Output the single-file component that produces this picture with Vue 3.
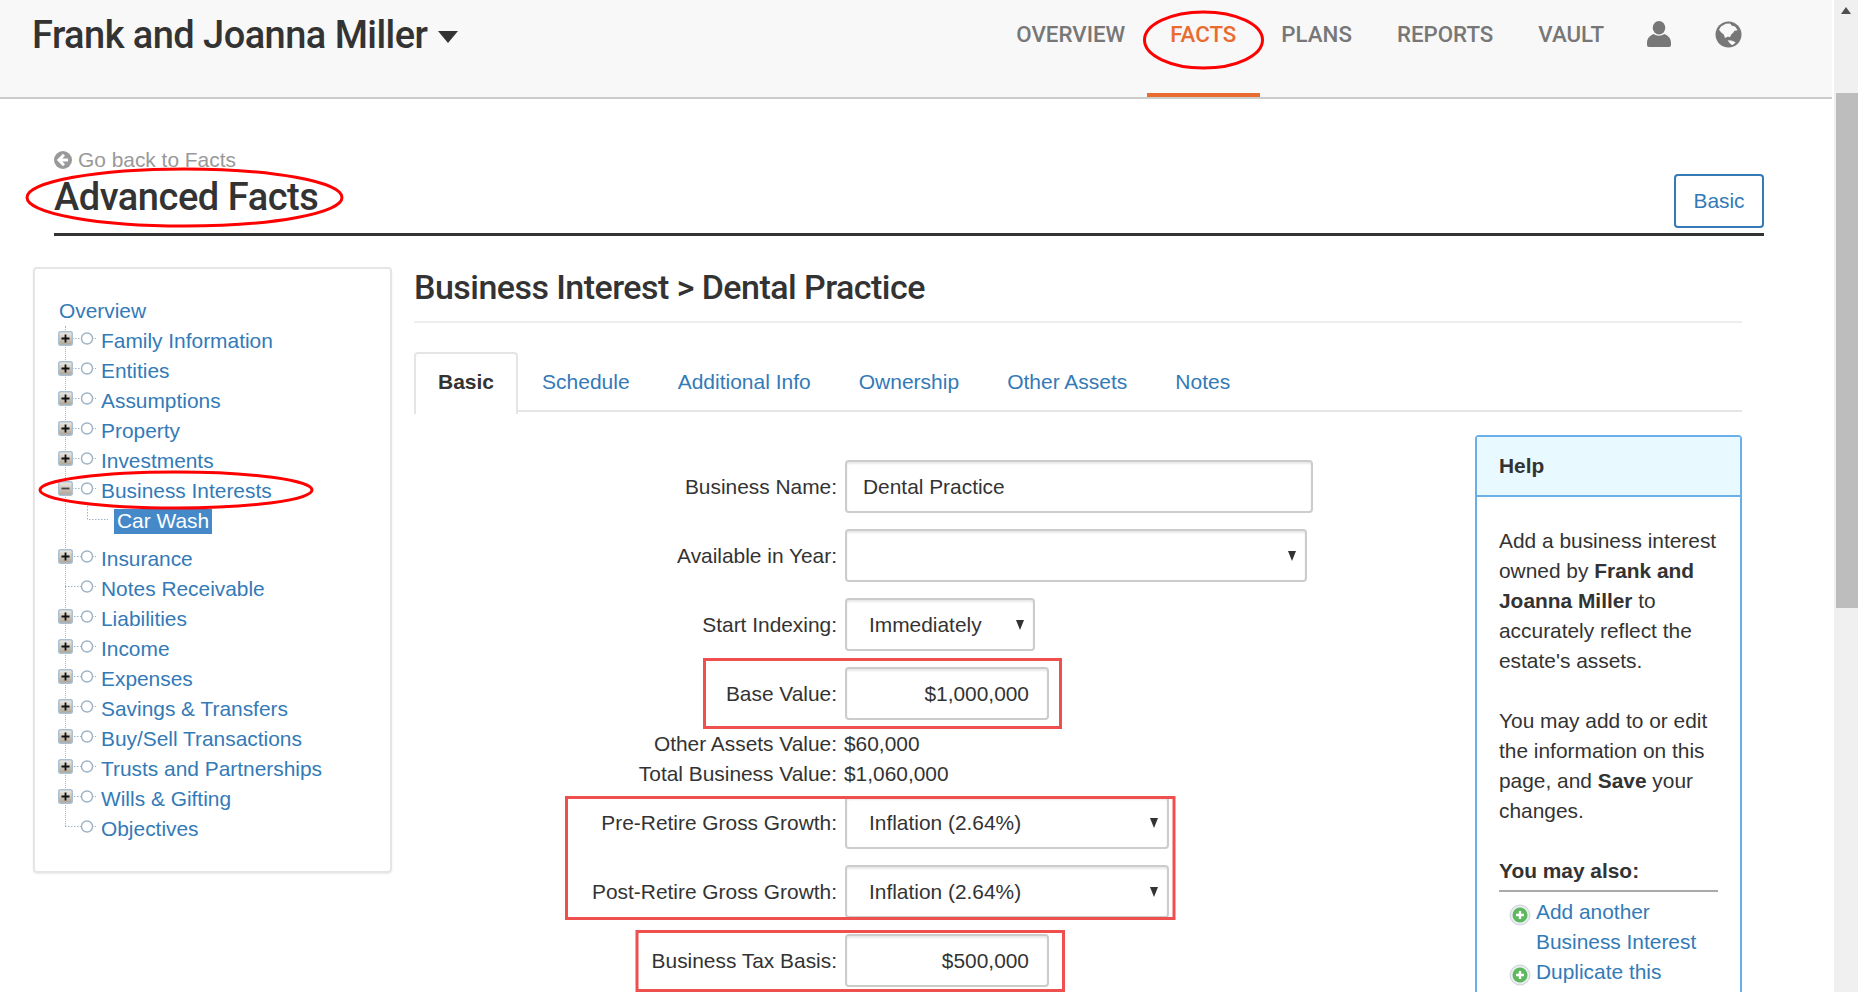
<script setup>
const navItems = [
  { label: 'OVERVIEW' },
  { label: 'FACTS', active: true },
  { label: 'PLANS' },
  { label: 'REPORTS' },
  { label: 'VAULT' }
]
const treeTop = [
  { label: 'Family Information', kind: 'plus' },
  { label: 'Entities', kind: 'plus' },
  { label: 'Assumptions', kind: 'plus' },
  { label: 'Property', kind: 'plus' },
  { label: 'Investments', kind: 'plus' },
  { label: 'Business Interests', kind: 'minus' }
]
const treeBottom = [
  { label: 'Insurance', kind: 'plus' },
  { label: 'Notes Receivable', kind: 'leaf' },
  { label: 'Liabilities', kind: 'plus' },
  { label: 'Income', kind: 'plus' },
  { label: 'Expenses', kind: 'plus' },
  { label: 'Savings & Transfers', kind: 'plus' },
  { label: 'Buy/Sell Transactions', kind: 'plus' },
  { label: 'Trusts and Partnerships', kind: 'plus' },
  { label: 'Wills & Gifting', kind: 'plus' },
  { label: 'Objectives', kind: 'leaf' }
]
const tabs = ['Schedule', 'Additional Info', 'Ownership', 'Other Assets', 'Notes']
</script>

<template>
  <div class="screen">
    <div class="page">
      <header class="topbar">
        <div class="client">
          <span>Frank and Joanna Miller</span>
          <span class="client-caret"></span>
        </div>
        <nav class="nav">
          <a v-for="item in navItems" :key="item.label" class="nav-link" :class="{ active: item.active }">{{ item.label }}</a>
          <a class="nav-icon user">
            <svg width="24" height="26" viewBox="0 0 24 26"><ellipse cx="12" cy="6.800" rx="6.300" ry="6.800" fill="#777"/><path fill="#777" d="M0 22C0 17 3 14.500 7 13C9 15.200 15 15.200 17 13C21 14.500 24 17 24 22V24Q24 26 22 26H2Q0 26 0 24Z"/></svg>
          </a>
          <a class="nav-icon">
            <svg width="27" height="27" viewBox="0 0 27 27"><circle cx="13.500" cy="13.500" r="13" fill="#777"/><path fill="#f8f8f8" d="M10.700 2.700L15 2.400L17 4.800L20 5.400L22.700 9.300L19.500 9.800L18 12L16.400 13.200L15 16.300L13 15.600L10 17L8.800 13.500L6.500 11.800L4 8.700L6 5.500Z"/><path fill="#f8f8f8" d="M12.700 19.300L16.500 19.500L20.700 21.300L18.500 23.400L16.700 24L14.500 22Z"/></svg>
          </a>
        </nav>
      </header>

      <section class="titlebar">
        <div>
          <a class="back">
            <svg width="18" height="18" viewBox="0 0 18 18"><circle cx="9" cy="9" r="9" fill="#999"/><path d="M10 3.800 4.800 9l5.200 5.200M5.500 9H14" fill="none" stroke="#fff" stroke-width="2.800"/></svg>
            <span>Go back to Facts</span>
          </a>
          <h1>Advanced Facts</h1>
        </div>
        <a class="mode-btn">Basic</a>
      </section>

      <div class="content">
        <aside class="side">
          <svg class="defs" width="0" height="0">
            <defs>
              <linearGradient id="boxFill" x1="0" y1="0" x2="0" y2="1">
                <stop offset="0" stop-color="#efece6"/>
                <stop offset="1" stop-color="#aea393"/>
              </linearGradient>
            </defs>
          </svg>
          <div class="tree">
            <div class="tree-line"></div>
            <a class="overview">Overview</a>
            <div v-for="row in treeTop" :key="row.label" class="tree-row">
              <svg class="tree-icon" width="43" height="30" viewBox="0 0 43 30">
                <path d="M14 12.500h9M34 12.500h4" stroke="#9db3c6" stroke-dasharray="1.500 1.500" fill="none"/>
                <rect x=".75" y="5.750" width="13.500" height="13.500" rx="2" fill="url(#boxFill)" stroke="#a9bfd2" stroke-width="1.500"/>
                <path v-if="row.kind === 'plus'" d="M3.500 12.500h8M7.500 8.500v8" stroke="#111" stroke-width="1.800"/>
                <path v-else d="M3.500 12.500h8" stroke="#444" stroke-width="1.800"/>
                <circle cx="29" cy="12.500" r="5.500" fill="#fff" stroke="#9db3c6" stroke-width="1.400"/>
              </svg>
              <a>{{ row.label }}</a>
            </div>
            <div class="tree-row child">
              <svg class="tree-icon" width="56" height="38" viewBox="0 0 56 38">
                <path d="M29.500 0v13.500H50" stroke="#9db3c6" stroke-dasharray="1.500 1.500" fill="none"/>
              </svg>
              <a class="selected">Car Wash</a>
            </div>
            <div v-for="row in treeBottom" :key="row.label" class="tree-row">
              <svg class="tree-icon" width="43" height="30" viewBox="0 0 43 30">
                <path d="M7 12.500h16M34 12.500h4" stroke="#9db3c6" stroke-dasharray="1.500 1.500" fill="none"/>
                <template v-if="row.kind === 'plus'">
                  <rect x=".75" y="5.750" width="13.500" height="13.500" rx="2" fill="url(#boxFill)" stroke="#a9bfd2" stroke-width="1.500"/>
                  <path d="M3.500 12.500h8M7.500 8.500v8" stroke="#111" stroke-width="1.800"/>
                </template>
                <circle cx="29" cy="12.500" r="5.500" fill="#fff" stroke="#9db3c6" stroke-width="1.400"/>
              </svg>
              <a>{{ row.label }}</a>
            </div>
          </div>
        </aside>

        <main class="main">
          <h2>Business Interest &gt; Dental Practice</h2>
          <div class="tabs">
            <a class="tab current">Basic</a>
            <a v-for="t in tabs" :key="t" class="tab">{{ t }}</a>
          </div>
          <div class="body">
            <form class="form">
              <label>Business Name:</label>
              <input class="ctl w-name" value="Dental Practice" />

              <label>Available in Year:</label>
              <div class="sel w-year"><div class="ctl" role="combobox"></div></div>

              <label>Start Indexing:</label>
              <div class="sel w-index"><div class="ctl" role="combobox">Immediately</div></div>

              <label>Base Value:</label>
              <input class="ctl num" value="$1,000,000" />

              <div class="summary">
                <label>Other Assets Value:</label>
                <div>$60,000</div>
                <label>Total Business Value:</label>
                <div>$1,060,000</div>
              </div>

              <label>Pre-Retire Gross Growth:</label>
              <div class="sel w-growth"><div class="ctl" role="combobox">Inflation (2.64%)</div></div>

              <label>Post-Retire Gross Growth:</label>
              <div class="sel w-growth"><div class="ctl" role="combobox">Inflation (2.64%)</div></div>

              <label>Business Tax Basis:</label>
              <input class="ctl num" value="$500,000" />
            </form>

            <aside class="help">
              <div class="help-head">Help</div>
              <div class="help-body">
                <p>Add a business interest owned by <b>Frank and Joanna Miller</b> to accurately reflect the estate's assets.</p>
                <p>You may add to or edit the information on this page, and <b>Save</b> your changes.</p>
                <div class="also">You may also:</div>
                <div class="action">
                  <svg width="22" height="22" viewBox="0 0 22 22"><circle cx="11" cy="11" r="10" fill="#e9ecef" stroke="#ccd3db"/><circle cx="11" cy="11" r="7.500" fill="#5cb85c"/><path d="M7 11h8M11 7v8" stroke="#fff" stroke-width="2.400"/></svg>
                  <a>Add another Business Interest</a>
                </div>
                <div class="action">
                  <svg width="22" height="22" viewBox="0 0 22 22"><circle cx="11" cy="11" r="10" fill="#e9ecef" stroke="#ccd3db"/><circle cx="11" cy="11" r="7.500" fill="#5cb85c"/><path d="M7 11h8M11 7v8" stroke="#fff" stroke-width="2.400"/></svg>
                  <a>Duplicate this</a>
                </div>
              </div>
            </aside>
          </div>
        </main>
      </div>
    </div>

    <div class="scrollbar">
      <div class="scroll-up"></div>
      <div class="scroll-thumb"></div>
    </div>

    <svg class="marks" width="1858" height="992" viewBox="0 0 1858 992">
      <ellipse cx="1203.500" cy="40" rx="59" ry="28" />
      <ellipse cx="184.500" cy="197.500" rx="157.500" ry="28.500" />
      <ellipse cx="176" cy="490" rx="136" ry="18" />
      <rect x="704.500" y="659.500" width="356" height="68" />
      <rect x="566.500" y="797.500" width="607.500" height="121" />
      <rect x="637" y="931.500" width="426.500" height="59" />
    </svg>
  </div>
</template>

<style>
html, body { margin: 0; overflow: hidden; background: #fff; }
</style>

<style scoped>
.screen {
  position: relative;
  display: flex;
  width: 1858px;
  height: 992px;
  overflow: hidden;
  font-family: "Liberation Sans", Arial, sans-serif;
  font-size: 20.900px;
  line-height: 30px;
  color: #333;
}
.page { width: 1834px; flex: none; }
a { color: #337ab7; text-decoration: none; }

.topbar {
  height: 97px;
  border-bottom: 2px solid #ccc;
  margin-right: 2px;
  background: #f8f8f8;
  display: flex;
  justify-content: space-between;
  padding-left: 32px;
  padding-right: 69px;
}
.client {
  font-family: Roboto, sans-serif;
  font-size: 38px;
  font-weight: 500;
  letter-spacing: -.55px;
  line-height: 70px;
  color: #333;
  display: flex;
  align-items: flex-start;
}
.client-caret {
  width: 0;
  height: 0;
  margin: 31px 0 0 10.500px;
  border-left: 10.500px solid transparent;
  border-right: 10.500px solid transparent;
  border-top: 12px solid #333;
}
.nav { display: flex; }
.nav-link {
  height: 93px;
  padding: 0 22.5px;
  font-family: Roboto, sans-serif;
  font-size: 22.300px;
  font-weight: 500;
  line-height: 68px;
  color: #777;
}
.nav-link.active {
  padding: 0 23.500px;
  margin: 0 -1px;
  color: #e96b30;
  border-bottom: 4px solid #e96b30;
}
.nav-icon { padding: 21px 21px 0 23px; }
.nav-icon.user { padding-left: 20.500px; }

.titlebar {
  margin: 46px 70px 0 54px;
  height: 88px;
  border-bottom: 3px solid #333;
  display: flex;
  justify-content: space-between;
  align-items: flex-start;
}
.back { display: flex; align-items: center; gap: 6px; color: #999; height: 30px; }
h1 {
  margin: 0;
  font-family: Roboto, sans-serif;
  font-size: 38px;
  font-weight: 500;
  letter-spacing: -.45px;
  line-height: 44px;
}
.mode-btn {
  margin-top: 29px;
  width: 86px;
  height: 50px;
  border: 2px solid #337ab7;
  border-radius: 4px;
  text-align: center;
  line-height: 50px;
}

.content { display: flex; align-items: flex-start; margin: 31px 0 0 33px; }
.side {
  width: 355px;
  height: 602px;
  flex: none;
  border: 2px solid #e5e5e5;
  border-radius: 4px;
  box-shadow: 0 1px 2px rgba(0, 0, 0, .08);
}
.defs { position: absolute; }
.tree { position: relative; padding: 27px 0 0 23px; }
.tree-line {
  position: absolute;
  left: 30px;
  top: 57px;
  height: 500px;
  border-left: 1.500px dotted #9db3c6;
}
.overview { display: block; margin-left: 1px; }
.tree-row { position: relative; display: flex; align-items: flex-start; height: 30px; }
.tree-row.child { height: 38px; }
.tree-icon { flex: none; }
.selected {
  margin-top: 3px;
  padding: 0 3px;
  height: 25px;
  line-height: 23px;
  background: #4589c8;
  color: #fff;
}

.main { width: 1328px; margin-left: 22px; flex: none; }
h2 {
  margin: 0;
  font-family: Roboto, sans-serif;
  font-size: 34px;
  font-weight: 500;
  letter-spacing: -.54px;
  line-height: 40px;
  height: 54px;
  border-bottom: 2px solid #eee;
}
.tabs {
  display: flex;
  margin-top: 29px;
  height: 58px;
  border-bottom: 2px solid #e5e5e5;
  font-size: 21px;
}
.tab { padding: 0 24px; line-height: 60px; height: 58px; }
.tab.current {
  height: 60px;
  padding: 0 22px;
  border: 2px solid #e5e5e5;
  border-bottom: 0;
  border-radius: 4px 4px 0 0;
  background: #fff;
  color: #333;
  font-weight: 700;
  line-height: 56px;
}

.body { display: flex; align-items: flex-start; }
.form {
  width: 1061px;
  flex: none;
  margin-top: 48px;
  display: grid;
  grid-template-columns: 423px 1fr;
  column-gap: 8px;
  row-gap: 16px;
  align-items: center;
}
.form label { text-align: right; }
.summary {
  grid-column: 1 / -1;
  display: grid;
  grid-template-columns: 423px 1fr;
  column-gap: 7px;
  margin: -7px 0 -9px;
}
.ctl {
  display: block;
  box-sizing: border-box;
  width: 204px;
  height: 53px;
  margin: 0;
  padding: 0 16px;
  border: 2px solid #ccc;
  border-radius: 4px;
  background: #fff;
  box-shadow: inset 0 2px 2px rgba(0, 0, 0, .09);
  font: inherit;
  line-height: 49px;
  color: #333;
  outline: none;
}
.w-name { width: 468px; }
.num { text-align: right; padding-right: 18px; }
.sel { position: relative; }
.sel .ctl { width: 100%; padding-left: 22px; padding-right: 24px; }
.sel::after {
  content: "";
  position: absolute;
  right: 11px;
  top: 22px;
  border-left: 4.500px solid transparent;
  border-right: 4.500px solid transparent;
  border-top: 10px solid #333;
}
.w-year { width: 462px; }
.w-index { width: 190px; }
.w-growth { width: 324px; }

.help {
  width: 267px;
  flex: none;
  box-sizing: border-box;
  margin-top: 23px;
  height: 700px;
  border: 2px solid #6aafe8;
  border-radius: 4px 4px 0 0;
}
.help-head {
  height: 60px;
  border-bottom: 2px solid #6aafe8;
  background: #e8f9ff;
  padding: 0 22px;
  font-weight: 700;
  line-height: 58px;
  box-sizing: border-box;
}
.help-body { padding: 29px 22px 0; }
.help-body p { margin: 0 0 30px; }
.also {
  font-weight: 700;
  padding-bottom: 4px;
  border-bottom: 2px solid #aaa;
  margin-bottom: 5px;
}
.action { display: flex; padding-left: 10px; gap: 5px; }
.action svg { flex: none; margin-top: 7px; }
.action a { display: block; }

.scrollbar { position: relative; width: 24px; flex: none; background: #f0f0f0; }
.scroll-up {
  position: absolute;
  left: 7px;
  top: 7px;
  border-left: 5.500px solid transparent;
  border-right: 5.500px solid transparent;
  border-bottom: 7px solid #505050;
}
.scroll-thumb {
  position: absolute;
  left: 2px;
  right: 0;
  top: 93px;
  height: 515px;
  background: #bdbdbd;
}

.marks { position: absolute; left: 0; top: 0; pointer-events: none; }
.marks ellipse { fill: none; stroke: #f00; stroke-width: 3; }
.marks rect { fill: none; stroke: #ef4f4f; stroke-width: 3; }
</style>
